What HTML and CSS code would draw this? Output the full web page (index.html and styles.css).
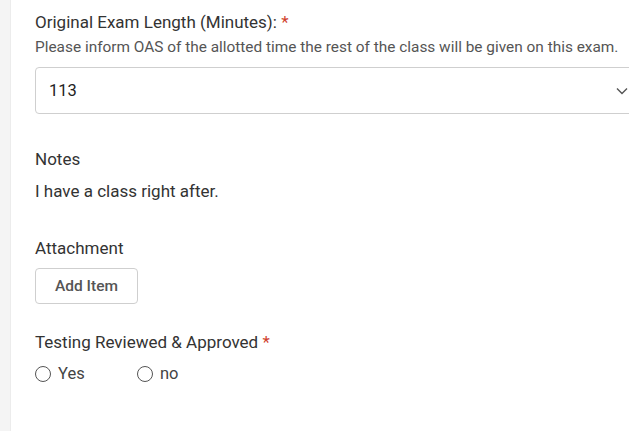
FILE: index.html
```html
<!DOCTYPE html>
<html lang="en">

<head>
    <meta charset="UTF-8">
    <meta name="viewport" content="width=device-width, initial-scale=1.0">
    <title>Exam Request</title>
    <link rel="stylesheet" href="styles.css">
</head>

<body>
    <div class="sidebar"></div>
    <div class="container">
        <div class="form-group first">
            <label for="examLength">Original Exam Length (Minutes): <span class="required">*</span></label>
            <p class="help">Please inform OAS of the allotted time the rest of the class will be given on this exam.</p>
            <div class="select-box">
                <span id="examLength">113</span>
                <svg class="chevron" width="12" height="8" viewBox="0 0 12 8">
                    <path d="M1 1.5 L6 6.5 L11 1.5" fill="none" stroke="#555" stroke-width="1.4" />
                </svg>
            </div>
        </div>

        <div class="form-group notes">
            <label>Notes</label>
            <p class="value">I have a class right after.</p>
        </div>

        <div class="form-group attach">
            <label>Attachment</label>
            <button type="button" class="btn">Add Item</button>
        </div>

        <div class="form-group approve">
            <label>Testing Reviewed &amp; Approved <span class="required">*</span></label>
            <div class="radios">
                <label class="radio"><span class="circle"></span>Yes</label>
                <label class="radio"><span class="circle"></span>no</label>
            </div>
        </div>
    </div>
</body>

</html>
```

FILE: styles.css
```css
body {
    font-family: Roboto, "Noto Sans", Arial, sans-serif;
    margin: 0;
    display: flex;
    min-height: 100vh;
    background: #fff;
    color: #333;
    overflow: hidden;
}

.sidebar {
    width: 10px;
    flex-shrink: 0;
    background-color: #f4f4f4;
    border-right: 1px solid #ececec;
}

.container {
    flex: 1;
    padding: 12px 0 0 24px;
    min-width: 0;
}

.form-group label {
    display: block;
    font-size: 17px;
    line-height: 20px;
    color: #333;
}

.required {
    color: #d0402b;
}

.help {
    margin: 5px 0 0;
    font-size: 15.4px;
    line-height: 20px;
    color: #555;
    white-space: nowrap;
}

.select-box {
    margin-top: 10px;
    width: 610px;
    height: 47px;
    box-sizing: border-box;
    border: 1px solid #cfcfcf;
    border-radius: 4px;
    display: flex;
    align-items: center;
    justify-content: space-between;
    padding: 0 16px 0 13px;
    font-size: 16.5px;
    color: #222;
}

.notes {
    margin-top: 35px;
}

.value {
    margin: 12px 0 0;
    font-size: 17px;
    line-height: 20px;
    color: #333;
}

.attach {
    margin-top: 37px;
}

.btn {
    margin-top: 10px;
    width: 103px;
    height: 36px;
    background: #fff;
    border: 1px solid #cfcfcf;
    border-radius: 4px;
    font-family: inherit;
    font-size: 15.5px;
    font-weight: 500;
    color: #555;
    cursor: pointer;
}

.approve {
    margin-top: 28px;
}

.radios {
    display: flex;
    margin-top: 12px;
}

.form-group .radio {
    display: flex;
    align-items: center;
    width: 102px;
    font-size: 16.5px;
    color: #444;
}

.circle {
    width: 14px;
    height: 14px;
    border: 1.3px solid #555;
    border-radius: 50%;
    margin-right: 7px;
}
```
